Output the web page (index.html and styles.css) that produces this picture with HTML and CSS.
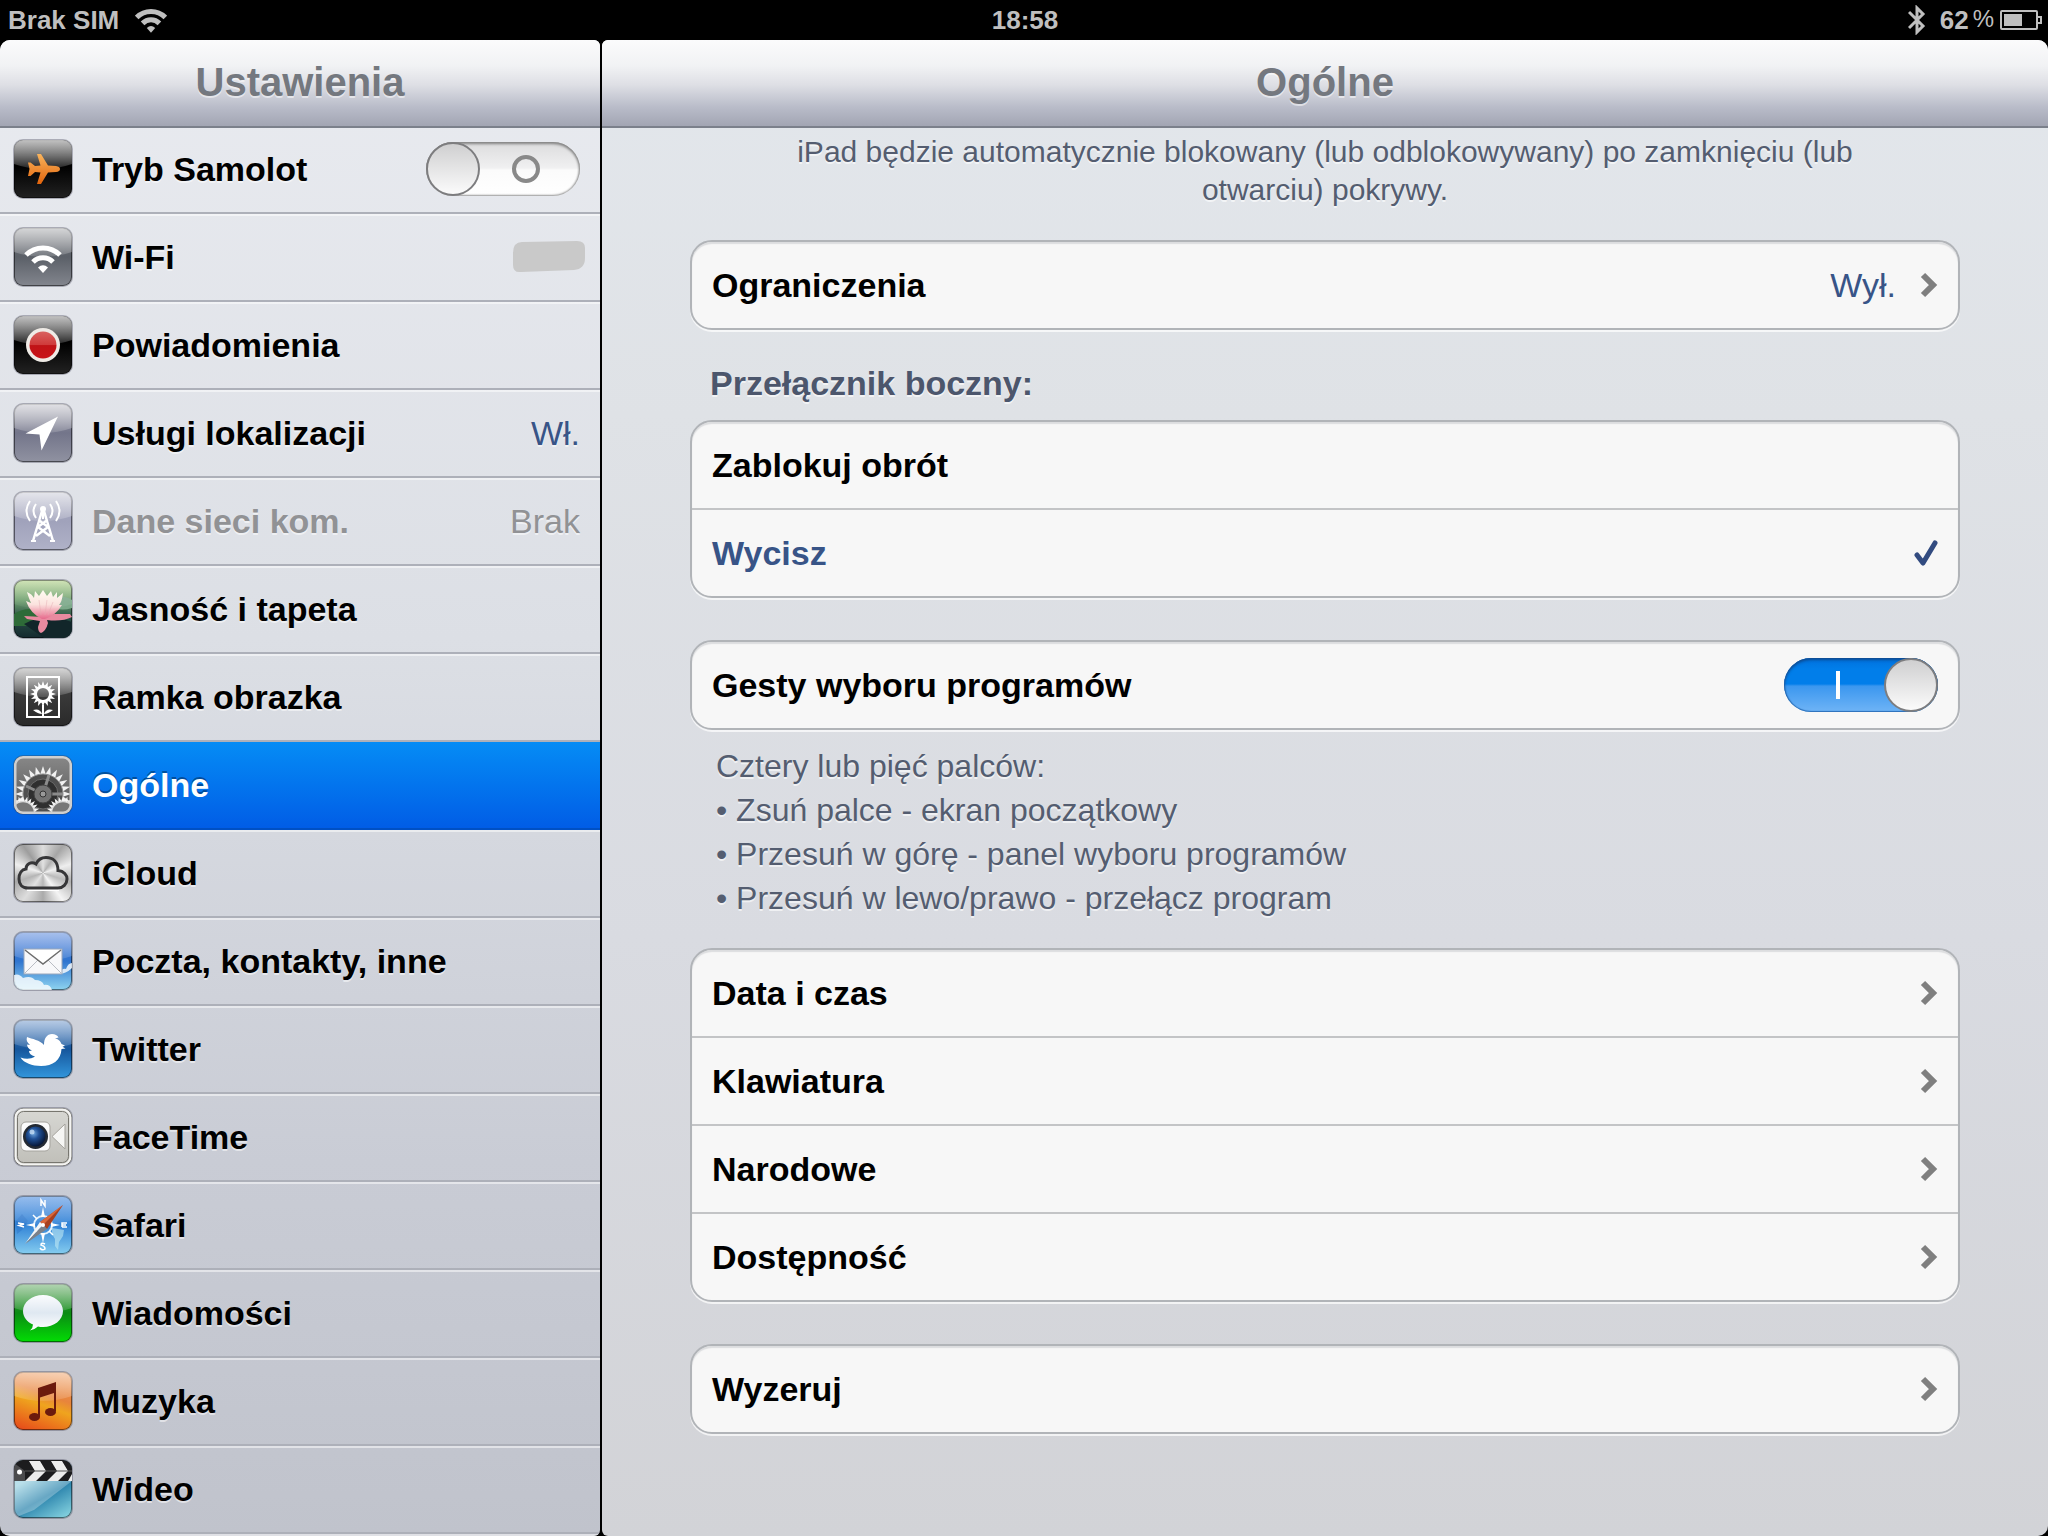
FILE: index.html
```html
<!DOCTYPE html>
<html lang="pl">
<head>
  <meta charset="UTF-8">
  <meta name="viewport" content="width=device-width, initial-scale=1">
  <title>Ustawienia</title>
  <link rel="stylesheet" href="styles.css">
</head>
<body>

  <!-- shared gradients and shapes -->
  <svg class="defs" width="0" height="0" aria-hidden="true">
    <defs>
      <linearGradient id="shine" x1="0" y1="0" x2="0" y2="1">
        <stop offset="0" stop-color="#fff" stop-opacity=".7"/>
        <stop offset="1" stop-color="#fff" stop-opacity=".14"/>
      </linearGradient>
      <linearGradient id="orange" x1="0" y1="0" x2="0" y2="1">
        <stop offset="0" stop-color="#f9b45c"/>
        <stop offset="1" stop-color="#e2640c"/>
      </linearGradient>
      <linearGradient id="red" x1="0" y1="0" x2="0" y2="1">
        <stop offset="0" stop-color="#d9625f"/>
        <stop offset=".5" stop-color="#cf3a3a"/>
        <stop offset=".52" stop-color="#c01316"/>
        <stop offset="1" stop-color="#c9141a"/>
      </linearGradient>
      <linearGradient id="petal" x1="0" y1="0" x2="0" y2="1">
        <stop offset="0" stop-color="#fffdf0"/>
        <stop offset=".5" stop-color="#fbe0dc"/>
        <stop offset="1" stop-color="#e66a8c"/>
      </linearGradient>
      <linearGradient id="bubble" x1="0" y1="0" x2="0" y2="1">
        <stop offset="0" stop-color="#fbfcfe"/>
        <stop offset=".5" stop-color="#dfe8f1"/>
        <stop offset="1" stop-color="#fff"/>
      </linearGradient>
      <radialGradient id="lens" cx=".4" cy=".35" r=".7">
        <stop offset="0" stop-color="#6fa6de"/>
        <stop offset=".4" stop-color="#1f4f94"/>
        <stop offset="1" stop-color="#04102c"/>
      </radialGradient>
      <path id="gloss" d="M0 0H58V24Q29 34 0 24Z" fill="url(#shine)"/>
      <path id="tooth" d="M-3 -19L0 -28L3 -19Z"/>
      <g id="teeth">
        <use href="#tooth"/>
        <use href="#tooth" transform="rotate(15)"/>
        <use href="#tooth" transform="rotate(30)"/>
        <use href="#tooth" transform="rotate(45)"/>
      </g>
      <g id="gear">
        <use href="#teeth"/>
        <use href="#teeth" transform="rotate(60)"/>
        <use href="#teeth" transform="rotate(120)"/>
        <use href="#teeth" transform="rotate(180)"/>
        <use href="#teeth" transform="rotate(240)"/>
        <use href="#teeth" transform="rotate(300)"/>
      </g>
      <path id="ray" d="M-2 -7L0 -13L2 -7Z"/>
      <g id="rays">
        <use href="#ray"/>
        <use href="#ray" transform="rotate(22.500)"/>
        <use href="#ray" transform="rotate(45)"/>
        <use href="#ray" transform="rotate(67.500)"/>
      </g>
      <g id="wifi" fill="none">
        <path d="M12 27A24 24 0 0 1 46 27"/>
        <path d="M19 34A14 14 0 0 1 39 34"/>
        <path d="M24 39.500Q29 35 34 39.500L29 45Z" stroke="none" fill="currentColor"/>
      </g>
      <path id="arrow" d="M3 3L13 13L3 23" fill="none" stroke="#7f7f7f" stroke-width="6"/>
    </defs>
  </svg>

  <header class="status">
    <div class="status-left">
      <span>Brak SIM</span>
      <svg width="32" height="26" viewBox="10 15 38 30" stroke="currentColor" stroke-width="6" aria-hidden="true"><use href="#wifi"/></svg>
    </div>
    <time>18:58</time>
    <div class="status-right">
      <svg width="18" height="30" viewBox="0 0 18 30" fill="none" stroke="currentColor" stroke-width="3" aria-hidden="true">
        <path d="M1 7L15 21L9 27V3L15 9L1 23"/>
      </svg>
      <span class="percent">62<small>%</small></span>
      <svg width="42" height="20" viewBox="0 0 42 20" fill="none" stroke="currentColor" stroke-width="2" aria-hidden="true">
        <rect x="1" y="1" width="36" height="18" rx="1"/>
        <path d="M38 7H41V13H38"/>
        <rect x="4" y="4" width="18" height="12" fill="currentColor" stroke="none"/>
      </svg>
    </div>
  </header>

  <div class="split">
    <nav class="sidebar">
      <h1 class="bar">Ustawienia</h1>
      <ul class="menu">
        <li>
          <label class="item">
            <svg class="icon black" viewBox="0 0 58 58">
              <use href="#gloss"/>
              <path fill="url(#orange)" d="M46 29Q46 31.500 42 32L34 32.500L27 44H23L26.500 32.500L21 32L16.500 36H14L15.500 29L14 22.500H16.500L21 26L26.500 25.500L23 14H27L34 25.500L42 26Q46 26.500 46 29Z"/>
            </svg>
            <span class="name">Tryb Samolot</span>
            <input class="switch" type="checkbox">
          </label>
        </li>
        <li>
          <a class="item item-wide" href="#wifi-settings">
            <svg class="icon grey" viewBox="0 0 58 58" color="#fff" stroke="#fff" stroke-width="5">
              <use href="#gloss" stroke="none"/>
              <use href="#wifi"/>
            </svg>
            <span class="name">Wi-Fi</span>
            <svg width="74" height="32" viewBox="0 0 74 32"><path fill="#c9c9c9" d="M10 1Q1 1 1 12V24Q1 32 9 31L62 29Q73 28 73 17V7Q73 0 65 0Z"/></svg>
          </a>
        </li>
        <li>
          <a class="item" href="#powiadomienia">
            <svg class="icon black" viewBox="0 0 58 58">
              <use href="#gloss"/>
              <circle cx="29" cy="29" r="17" fill="#efebe6"/>
              <circle cx="29" cy="29" r="13.500" fill="url(#red)"/>
            </svg>
            <span class="name">Powiadomienia</span>
          </a>
        </li>
        <li>
          <a class="item" href="#lokalizacja">
            <svg class="icon violet" viewBox="0 0 58 58">
              <use href="#gloss"/>
              <path fill="#fff" d="M44 12.500L11.500 29.500L25.500 30.500L27.500 46.500Z"/>
            </svg>
            <span class="name">Usługi lokalizacji</span>
            <span class="value">Wł.</span>
          </a>
        </li>
        <li>
          <a class="item disabled" href="#dane" aria-disabled="true">
            <svg class="icon lilac" viewBox="0 0 58 58" fill="none" stroke="#fff" stroke-width="2">
              <use href="#gloss" stroke="none"/>
              <circle cx="29" cy="17" r="3" fill="#fff" stroke="none"/>
              <path d="M28 19L19 49M30 19L39 49M26 29L34 35L22 44M32 29L24 35L36 44" stroke-width="2.500"/>
              <path d="M17 49H22M36 49H41M29 17V27"/>
              <path d="M22 12Q17 19 22 26M36 12Q41 19 36 26M16 9Q9 19 16 29M42 9Q49 19 42 29"/>
            </svg>
            <span class="name">Dane sieci kom.</span>
            <span class="value">Brak</span>
          </a>
        </li>
        <li>
          <a class="item" href="#tapeta">
            <svg class="icon lotus" viewBox="0 0 58 58">
              <path fill="#2e6b38" d="M0 34Q16 24 30 34L20 46H0Z"/>
              <path fill="#7da98a" d="M36 18Q50 14 58 20V28Q46 32 36 26Z"/>
              <path fill="#12262a" d="M10 44Q30 32 58 42V58H30Z"/>
              <path fill="#e98aa0" d="M29 37L10 36L13 39L26 41L24 47Q24 52 27 53Q32 51 34 43L33 40Q48 42 58 37L56 34L40 34Z"/>
              <path fill="url(#petal)" d="M28 39Q16 33 12 21L17 23Q14 16 13 12Q18 14 20 18L21 11L25 16L29 10L33 16L37 11L39 17L43 12L43 18L49 13Q48 22 45 25L48 25Q42 35 31 39Z"/>
              <path fill="none" stroke="#e4a9b0" stroke-opacity=".5" stroke-width="1" d="M25 20L27 35M33 20L31 35M39 22L34 35"/>
              <use href="#gloss" opacity=".3"/>
            </svg>
            <span class="name">Jasność i tapeta</span>
          </a>
        </li>
        <li>
          <a class="item" href="#ramka">
            <svg class="icon coal" viewBox="0 0 58 58">
              <use href="#gloss"/>
              <rect x="13" y="9" width="32" height="40" fill="none" stroke="#fff" stroke-width="2"/>
              <g fill="#fff" transform="translate(29 26)">
                <use href="#rays"/>
                <use href="#rays" transform="rotate(90)"/>
                <use href="#rays" transform="rotate(180)"/>
                <use href="#rays" transform="rotate(270)"/>
                <circle r="7.500" fill="none" stroke="#fff" stroke-width="3"/>
              </g>
              <path fill="#fff" d="M28 37H30V48H28ZM28 46Q24 46 19 42Q26 40 28 46ZM30 46Q34 46 39 42Q32 40 30 46Z"/>
            </svg>
            <span class="name">Ramka obrazka</span>
          </a>
        </li>
        <li>
          <a class="item active" href="#ogolne" aria-current="page">
            <svg class="icon gears" viewBox="0 0 58 58">
              <use href="#gear" fill="#f1f1f1" transform="translate(29 38)"/>
              <circle cx="29" cy="38" r="20" fill="#4f4f4f" stroke="#8b8b8b"/>
              <circle cx="29" cy="38" r="15" fill="#2f2f2f" stroke="#6b6b6b"/>
              <path stroke="#8b8b8b" stroke-width="3" d="M29 38L35 19M29 38L12 30M29 38H49"/>
              <circle cx="29" cy="38" r="9" fill="#737373" stroke="#444"/>
              <circle cx="29" cy="38" r="3" fill="#999" stroke="#333"/>
              <g fill="#f6f6f6" transform="translate(9 57) scale(.6)"><use href="#gear"/><circle r="19" fill="#777" stroke="#ddd" stroke-width="2"/></g>
              <g fill="#f6f6f6" transform="translate(49 57) scale(.6)"><use href="#gear"/><circle r="19" fill="#777" stroke="#ddd" stroke-width="2"/></g>
              <rect x="1" y="1" width="56" height="56" rx="8" fill="none" stroke="#cfcfcf" stroke-width="3"/>
            </svg>
            <span class="name">Ogólne</span>
          </a>
        </li>
        <li>
          <a class="item" href="#icloud">
            <svg class="icon metal" viewBox="0 0 58 58">
              <path fill="none" stroke="#fff" stroke-width="2" d="M13 46H45"/>
              <path fill="#fff" fill-opacity=".15" stroke="#363638" stroke-width="3" d="M14 44C8 44 5 40 5 35C5 29 8 25.500 12 25C12 20 17 17 22 20C24 15.500 28 13.500 32 13.500C39 13.500 44 18 44 26.500C50 27 53 31 53 35C53 40 49 44 44 44Z"/>
            </svg>
            <span class="name">iCloud</span>
          </a>
        </li>
        <li>
          <a class="item" href="#poczta">
            <svg class="icon mail" viewBox="0 0 58 58">
              <path fill="#fff" fill-opacity=".8" d="M0 43Q5 41 9 46Q17 43 21 48Q28 48 30 53Q36 52 38 58H0ZM44 42Q48 36 52 37Q54 31 58 31V36Q52 42 44 42Z"/>
              <use href="#gloss" opacity=".7"/>
              <rect x="10" y="17" width="38" height="25" fill="#f8f8fa" stroke="#9aa7bb"/>
              <path fill="none" stroke="#b9bcc3" d="M11 41L24 28M47 41L34 28"/>
              <path fill="#fff" stroke="#6d6d6d" stroke-width="1.500" d="M11 18L29 32L47 18"/>
            </svg>
            <span class="name">Poczta, kontakty, inne</span>
          </a>
        </li>
        <li>
          <a class="item" href="#twitter">
            <svg class="icon twitter" viewBox="0 0 58 58">
              <use href="#gloss" opacity=".8"/>
              <path fill="#fff" d="M6.500 37.500C12 39.500 17 39 21 36.500C17 35.500 15 33.500 15 31L18 30.500C15 29.500 13 27 13 24.500L16 25C13 22.500 12 20 13 17C18 19 26 20 30 25C30 18 33 14 38 14C41 14 43.500 15.500 44.500 17.500L40.500 18.500C44 18.500 46.500 21 47.500 24L51 25.500L48.500 26.800L51.500 28.500L47.500 29C47 40 39 46 27 46C18 46 10 43 6.500 37.500Z"/>
            </svg>
            <span class="name">Twitter</span>
          </a>
        </li>
        <li>
          <a class="item" href="#facetime">
            <svg class="icon facetime" viewBox="0 0 58 58">
              <rect x="3.500" y="3.500" width="51" height="51" rx="6" fill="none" stroke="#77766f"/>
              <rect x="1.500" y="1.500" width="55" height="55" rx="8" fill="none" stroke="#f4f4f2" stroke-width="2"/>
              <rect x="7" y="14" width="29" height="29" rx="5" fill="#fbfbfb" stroke="#a5a39d"/>
              <path fill="#f6f6f4" stroke="#a5a39d" d="M38 28.500L51 16V41Z"/>
              <circle cx="21.500" cy="28.500" r="12.500" fill="#242a33"/>
              <circle cx="21.500" cy="28.500" r="10" fill="url(#lens)"/>
              <circle cx="18" cy="24" r="2.500" fill="#c7def5" opacity=".8"/>
            </svg>
            <span class="name">FaceTime</span>
          </a>
        </li>
        <li>
          <a class="item" href="#safari">
            <svg class="icon safari" viewBox="0 0 58 58">
              <path fill="#bfe9f3" fill-opacity=".6" d="M38 32L50 34L49 40L45 46L44 54L41 50L41 43L38 38Z"/>
              <path fill="#2b6fc4" fill-opacity=".4" d="M2 25L8 18L14 25L8 34L3 38Z"/>
              <use href="#gloss" opacity=".4"/>
              <circle cx="29" cy="29" r="9" fill="none" stroke="#e3f2fc" stroke-width="2"/>
              <path fill="#fff" d="M29 11L31 21H27ZM29 47L31 37H27ZM12 29L21 27V31ZM46 29L37 27V31Z"/>
              <path fill="none" stroke="#fff" stroke-width="1.500" d="M27 10V4L31 10V4M31 48Q27 46 27 49Q31 50 31 53Q28 55 26 52M4 27L10 28L5 29.500L10 31M48 31V27H53M48 29H52M48 31H53M19 19L23 23M39 39L35 35"/>
              <path fill="#a8401f" d="M49 9L33 33L26 26Z"/>
              <path fill="#d9683c" d="M49 9L29 29L26 26Z"/>
              <path fill="#f5f5f5" d="M11 48L26 26L29 29Z"/>
              <path fill="#7c8088" d="M11 48L29 29L33 33Z"/>
              <circle cx="29" cy="29" r="2" fill="#fff"/>
            </svg>
            <span class="name">Safari</span>
          </a>
        </li>
        <li>
          <a class="item" href="#wiadomosci">
            <svg class="icon messages" viewBox="0 0 58 58">
              <use href="#gloss" opacity=".8"/>
              <path fill="url(#bubble)" d="M29 11C40 11 49 18 49 27C49 36 40 43 29 43Q26 43 24 42.500Q20 46 16 46.500Q19 44 19 40.500C13 38 9 33 9 27C9 18 18 11 29 11Z"/>
            </svg>
            <span class="name">Wiadomości</span>
          </a>
        </li>
        <li>
          <a class="item" href="#muzyka">
            <svg class="icon music" viewBox="0 0 58 58">
              <use href="#gloss" opacity=".8"/>
              <path fill="#6c1a0d" d="M24 16L42 10V39H40V21L26 25.500V45H24Z"/>
              <ellipse cx="20.500" cy="45" rx="5.500" ry="4" fill="#6c1a0d"/>
              <ellipse cx="36.500" cy="40" rx="5.500" ry="4" fill="#6c1a0d"/>
            </svg>
            <span class="name">Muzyka</span>
          </a>
        </li>
        <li>
          <a class="item" href="#wideo">
            <svg class="icon video" viewBox="0 0 58 58">
              <path fill="#fff" fill-opacity=".28" d="M0 21H58L20 50L0 58Z"/>
              <rect width="58" height="21" fill="#1c1c1e"/>
              <path fill="#ececec" d="M15 1H26L32 11L22 21H11L21 11ZM37 1H48L54 11L44 21H33L43 11ZM58 14V21H54Z"/>
              <path fill="#4a4a4c" d="M0 3L11 11V21H0Z"/>
              <circle cx="5.500" cy="12" r="2.500" fill="#fff"/>
              <path stroke="#555" d="M11 11H58"/>
            </svg>
            <span class="name">Wideo</span>
          </a>
        </li>
      </ul>
    </nav>

    <main class="content">
      <h2 class="bar">Ogólne</h2>
      <div class="groups">
        <p class="note">iPad będzie automatycznie blokowany (lub odblokowywany) po zamknięciu (lub otwarciu) pokrywy.</p>

        <div class="card">
          <a class="cell" href="#ograniczenia">
            <span class="name">Ograniczenia</span>
            <span class="value">Wył.</span>
            <svg class="arrow" viewBox="0 0 18 26"><use href="#arrow"/></svg>
          </a>
        </div>

        <h3 class="group-title" id="side">Przełącznik boczny:</h3>
        <div class="card" role="radiogroup" aria-labelledby="side">
          <label class="cell">
            <input type="radio" name="side" value="rotation">
            <span class="name">Zablokuj obrót</span>
            <svg class="check" viewBox="0 0 24 26"><path d="M3 15L9 23L21 3"/></svg>
          </label>
          <label class="cell">
            <input type="radio" name="side" value="mute" checked>
            <span class="name">Wycisz</span>
            <svg class="check" viewBox="0 0 24 26"><path d="M3 15L9 23L21 3"/></svg>
          </label>
        </div>

        <div class="card gestures">
          <label class="cell">
            <span class="name">Gesty wyboru programów</span>
            <input class="switch" type="checkbox" checked>
          </label>
        </div>
        <div class="hints">
          <p>Cztery lub pięć palców:</p>
          <p>• Zsuń palce - ekran początkowy</p>
          <p>• Przesuń w górę - panel wyboru programów</p>
          <p>• Przesuń w lewo/prawo - przełącz program</p>
        </div>

        <div class="card">
          <a class="cell" href="#data">
            <span class="name">Data i czas</span>
            <svg class="arrow" viewBox="0 0 18 26"><use href="#arrow"/></svg>
          </a>
          <a class="cell" href="#klawiatura">
            <span class="name">Klawiatura</span>
            <svg class="arrow" viewBox="0 0 18 26"><use href="#arrow"/></svg>
          </a>
          <a class="cell" href="#narodowe">
            <span class="name">Narodowe</span>
            <svg class="arrow" viewBox="0 0 18 26"><use href="#arrow"/></svg>
          </a>
          <a class="cell" href="#dostepnosc">
            <span class="name">Dostępność</span>
            <svg class="arrow" viewBox="0 0 18 26"><use href="#arrow"/></svg>
          </a>
        </div>

        <div class="card reset">
          <a class="cell" href="#wyzeruj">
            <span class="name">Wyzeruj</span>
            <svg class="arrow" viewBox="0 0 18 26"><use href="#arrow"/></svg>
          </a>
        </div>
      </div>
    </main>
  </div>

</body>
</html>
```
FILE: styles.css
```css
*,
*::before,
*::after {
  box-sizing: border-box;
}

body {
  margin: 0;
  min-height: 100vh;
  display: flex;
  flex-direction: column;
  background: #000;
  color: #000;
  font-family: "Liberation Sans", Helvetica, Arial, sans-serif;
  font-size: 34px;
}

h1, h2, h3, p, ul {
  margin: 0;
  padding: 0;
}

a {
  color: inherit;
  text-decoration: none;
}

.defs {
  position: absolute;
}

/* status bar */
.status {
  display: grid;
  grid-template-columns: 1fr auto 1fr;
  align-items: center;
  height: 40px;
  padding: 0 6px 0 8px;
  color: #bfbfbf;
  font-size: 26px;
  font-weight: bold;
}

.status-left,
.status-right {
  display: flex;
  align-items: center;
  gap: 16px;
}

.status-right {
  justify-content: flex-end;
  gap: 14px;
}

.percent {
  display: flex;
  gap: 4px;
  margin-right: -8px;
}

.percent small {
  font-size: 24px;
  font-weight: normal;
}

/* two columns */
.split {
  flex: 1;
  display: grid;
  grid-template-columns: 600px 1fr;
  gap: 2px;
}

.sidebar,
.content {
  overflow: hidden;
}

.sidebar {
  border-radius: 10px 6px 6px 10px;
  background: linear-gradient(#e9ebf0, #dcdfe5 40%, #c9ccd5 75%, #c0c3cc);
}

.content {
  border-radius: 6px 10px 10px 6px;
  background: linear-gradient(#e3e7ec, #dfe2e6 25%, #d9dbe1 60%, #d2d3d7);
}

.bar {
  position: relative;
  height: 88px;
  margin-bottom: -2px;
  border-bottom: 2px solid #7b808b;
  background: linear-gradient(#fbfbfc, #f1f2f4 30%, #dedfe5 52%, #b9bcc9 78%, #a2a5b3);
  color: #74787f;
  font-size: 40px;
  line-height: 84px;
  text-align: center;
  text-shadow: 0 2px 0 rgba(255, 255, 255, .5);
}

/* left menu */
.menu {
  list-style: none;
}

.item {
  display: flex;
  align-items: center;
  gap: 20px;
  height: 88px;
  padding: 0 20px 0 14px;
  border-bottom: 2px solid #adb0b9;
  box-shadow: 0 2px 0 rgba(255, 255, 255, .5);
  text-shadow: 0 2px 0 rgba(255, 255, 255, .5);
}

.item-wide {
  padding-right: 14px;
}

.name {
  flex: 1;
  font-weight: bold;
}

.value {
  color: #385487;
}

.disabled .name,
.disabled .value {
  color: #919295;
}

.active {
  background: linear-gradient(#058cf5, #015de6);
  border-bottom-color: #0050c4;
  color: #fff;
  text-shadow: 0 -2px 0 rgba(0, 0, 0, .35);
}

.icon {
  width: 58px;
  height: 58px;
  border-radius: 9px;
  box-shadow: inset 0 0 0 1px rgba(0, 0, 0, .5), 0 0 0 1px rgba(60, 60, 80, .35);
}

.black { background: linear-gradient(#333, #000 45%, #222); }
.grey { background: linear-gradient(#75787d, #5b6068 50%, #83868e); }
.violet { background: linear-gradient(#9a9ba8, #73758a 50%, #9092a1); }
.lilac { background: linear-gradient(#a9abc0, #a0a2bb 50%, #b0b2c8); }
.lotus { background: linear-gradient(#c5dda4, #6fa06f 35%, #284f45 65%, #14292f); }
.coal { background: linear-gradient(#777, #3a3a3a 45%, #2a2a2a); }
.gears { background: linear-gradient(#888, #555); }
.metal { background: conic-gradient(#ddd, #a5a5a5, #eee, #b0b0b0, #f4f4f4, #aaa, #ddd, #a8a8a8, #eee, #9d9d9d, #ddd); }
.mail { background: linear-gradient(#5584dc, #2f74cf 50%, #8ed4f0); }
.twitter { background: linear-gradient(#5d8ac4, #16569c 50%, #3296dc); }
.facetime { background: linear-gradient(#d8d8d4, #bfbeb8); }
.safari { background: linear-gradient(#6ea3e6, #3283d6 50%, #85cdf0); }
.messages { background: linear-gradient(#4f9d4f, #0b8a13 50%, #02dd04); }
.music { background: linear-gradient(20deg, #e6431a, #efa41e 45%, #e8843c 60%, #ee9b5c); }
.video { background: linear-gradient(150deg, #9fd3e2 30%, #2e86ae 60%, #8fdbe5); }

/* switches */
.switch {
  appearance: none;
  display: flex;
  flex-direction: row-reverse;
  align-items: center;
  justify-content: space-between;
  width: 154px;
  height: 54px;
  margin: 0;
  padding-right: 40px;
  border-radius: 27px;
  background: linear-gradient(#dcdcdd, #f0f0f1 48%, #fbfbfb 52%, #fff);
  box-shadow: inset 0 2px 3px #888, inset 0 0 2px 1px #999;
}

.switch::before {
  content: "";
  width: 28px;
  height: 28px;
  border: 4px solid #898989;
  border-radius: 50%;
}

.switch::after {
  content: "";
  width: 54px;
  height: 54px;
  border: 2px solid #7d7d7f;
  border-radius: 50%;
  background: linear-gradient(#cfcfd0, #fbfbfb);
}

.switch:checked {
  flex-direction: row;
  padding: 0 0 0 52px;
  background: linear-gradient(#0070dc, #017eea 20%, #017eea 48%, #3b97ef 52%, #6fb4f6);
  box-shadow: inset 0 2px 3px #0a4a92, inset 0 0 1px 1px #2c71bb;
}

.switch:checked::before {
  width: 4px;
  height: 28px;
  border: 0;
  border-radius: 0;
  background: #fff;
}

/* right side */
.groups {
  padding: 7px 88px 88px;
  color: #545d70;
}

.note {
  padding: 0 60px 31px;
  font-size: 30px;
  line-height: 38px;
  text-align: center;
  text-shadow: 0 2px 0 rgba(255, 255, 255, .6);
}

.card {
  border: 2px solid #b1b4b8;
  border-radius: 22px;
  background: #f7f7f7;
  box-shadow: 0 2px 0 rgba(255, 255, 255, .7), inset 0 2px 1px #dcdddf;
  color: #000;
}

.cell {
  display: flex;
  align-items: center;
  height: 86px;
  padding: 0 20px;
}

.cell + .cell {
  height: 88px;
  border-top: 2px solid #c3c4c6;
}

.arrow {
  width: 18px;
  height: 26px;
  margin-left: 24px;
}

.check {
  display: none;
  width: 24px;
  height: 26px;
  fill: none;
  stroke: #324b80;
  stroke-width: 5;
  stroke-linecap: round;
  stroke-linejoin: round;
}

.cell input[type="radio"] {
  appearance: none;
  margin: 0;
}

.cell input:checked ~ .name {
  color: #385487;
}

.cell input:checked ~ .check {
  display: block;
}

.group-title {
  padding: 33px 20px 17px;
  color: #4c566c;
  font-size: 34px;
  line-height: 40px;
  text-shadow: 0 2px 0 rgba(255, 255, 255, .6);
}

.gestures,
.reset {
  margin-top: 42px;
}

.hints {
  padding: 14px 26px 28px;
  font-size: 32px;
  line-height: 44px;
  text-shadow: 0 2px 0 rgba(255, 255, 255, .6);
}
```
